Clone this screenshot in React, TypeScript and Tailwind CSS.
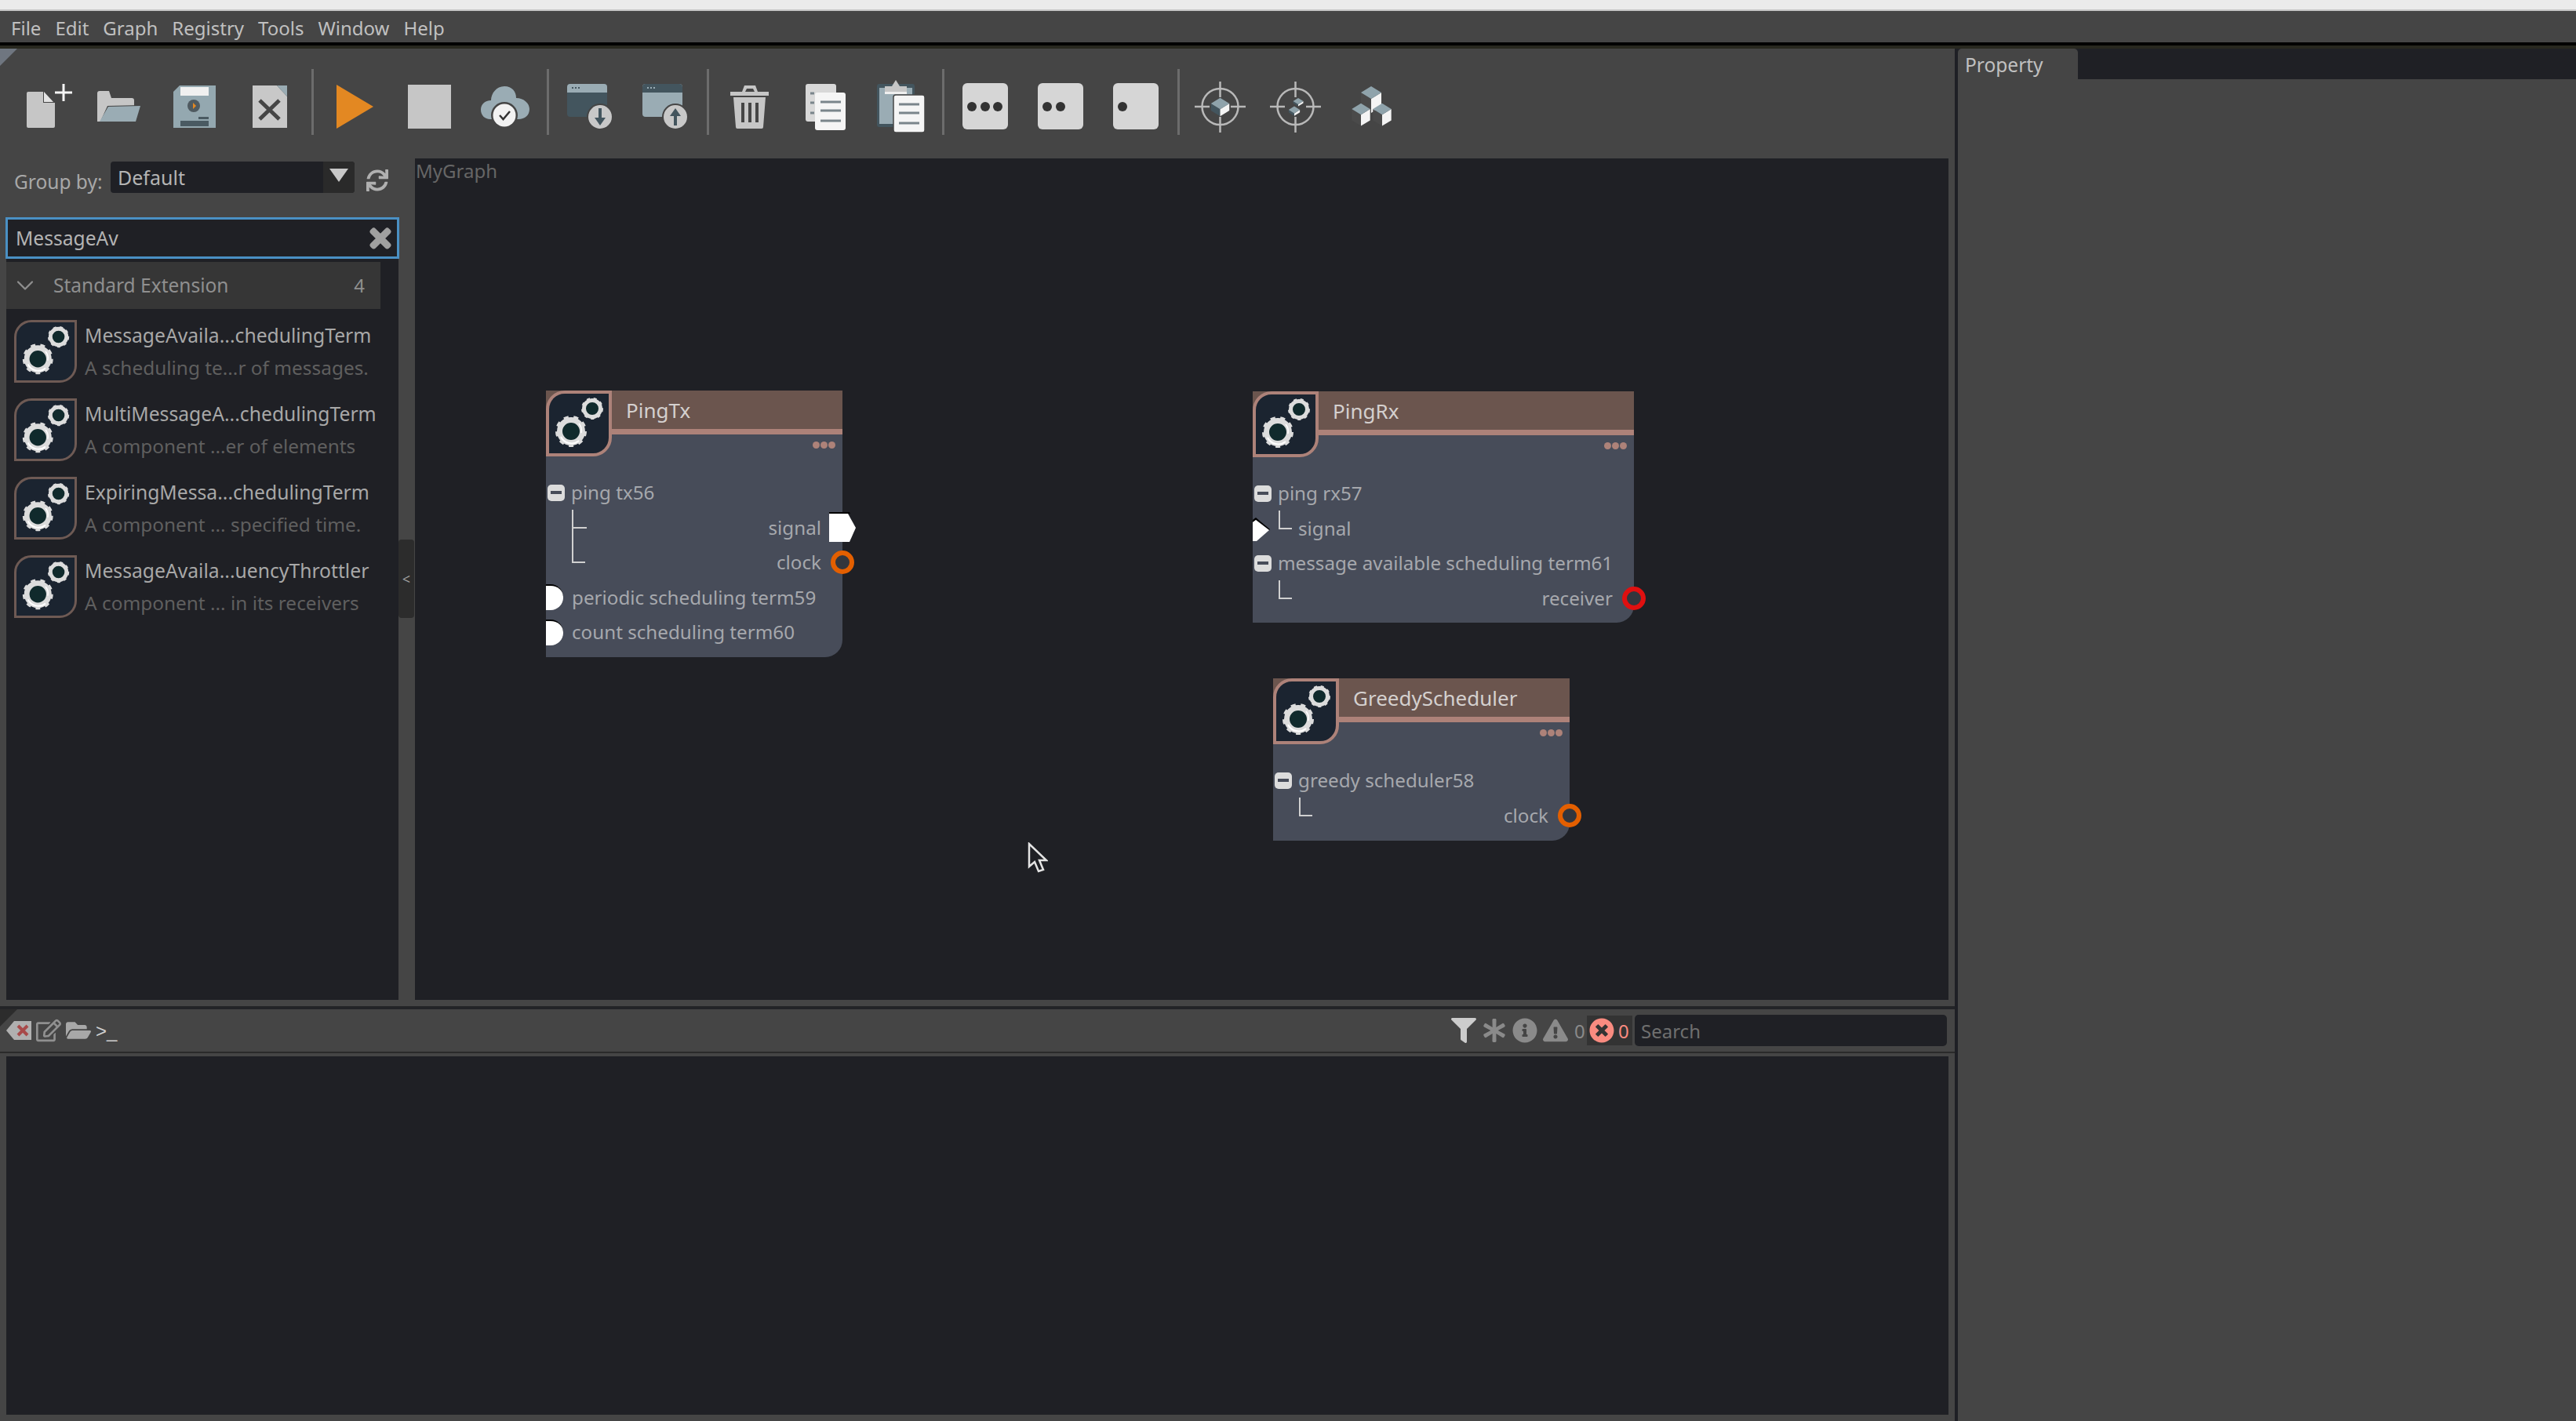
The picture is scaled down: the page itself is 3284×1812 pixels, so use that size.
import { FaAsterisk, FaExclamationTriangle, FaFilter, FaFolderOpen, FaInfoCircle, FaRegEdit, FaSync, FaTimes, FaTimesCircle } from "react-icons/fa"
import { ChevronDown } from "lucide-react"

const menus = ["File", "Edit", "Graph", "Registry", "Tools", "Window", "Help"]

const results = [
  { title: "MessageAvaila...chedulingTerm", desc: "A scheduling te...r of messages." },
  { title: "MultiMessageA...chedulingTerm", desc: "A component ...er of elements" },
  { title: "ExpiringMessa...chedulingTerm", desc: "A component ... specified time." },
  { title: "MessageAvaila...uencyThrottler", desc: "A component ... in its receivers" },
]

function Gears() {
  return (
    <svg viewBox="0 0 76 76" className="w-full h-full">
      <circle cx="28" cy="48" r="18" fill="none" stroke="#dcdcdc" strokeWidth="4" strokeDasharray="6 6.5" />
      <circle cx="28" cy="48" r="14.500" fill="#102a2c" stroke="#dcdcdc" strokeWidth="7" />
      <path d="M15 55 A15 15 0 0 0 38 60" fill="none" stroke="#fff" strokeWidth="2" />
      <path d="M38 38 A14 14 0 0 1 41 50" fill="none" stroke="#fff" strokeWidth="1.500" />
      <circle cx="55" cy="19" r="12.500" fill="none" stroke="#dcdcdc" strokeWidth="3" strokeDasharray="4 4.6" />
      <circle cx="55" cy="19" r="10.500" fill="#102a2c" stroke="#dcdcdc" strokeWidth="5" />
    </svg>
  )
}

function Divider() {
  return (
    <div className="w-[12px] h-[140px] flex items-center justify-center pb-[4px]">
      <div className="w-[3px] h-[84px] bg-[#6c6c6c]" />
    </div>
  )
}

function ToolIcon({ children }: { children: React.ReactNode }) {
  return (
    <button className="w-[96px] h-[96px] mt-[26px] shrink-0">
      <svg viewBox="0 0 96 96" className="w-[96px] h-[96px]">
        {children}
      </svg>
    </button>
  )
}

function Cube({ x, y, s = 1, h = 26, left = "#43555e" }: { x: number; y: number; s?: number; h?: number; left?: string }) {
  // x,y = centre of the top diamond
  return (
    <g transform={`translate(${x} ${y}) scale(${s})`}>
      <path d={`M-13 0 L0 8 V${8 + h} L-13 ${h} Z`} fill={left} />
      <path d={`M13 0 L0 8 V${8 + h} L13 ${h} Z`} fill="#f4f4f4" />
      <path d="M0 -8 L13 0 L0 8 L-13 0 Z" fill="#8fa3ab" />
    </g>
  )
}

function Crosshair() {
  return (
    <g fill="none" stroke="#b8b8b8">
      <circle cx="47.500" cy="48" r="23" strokeWidth="2.500" />
      <path d="M47.500 16 V36 M47.500 61 V81 M15 48 H34 M61 48 H80" strokeWidth="2.500" />
    </g>
  )
}

function DotsIcon({ n }: { n: number }) {
  return (
    <ToolIcon>
      <rect x="19" y="18" width="58" height="59" rx="6" fill="#d6d6d6" />
      {[31, 48, 64].slice(0, n).map((cx) => (
        <circle key={cx} cx={cx} cy="48" r="6" fill="#333" />
      ))}
    </ToolIcon>
  )
}

function WindowIcon({ up }: { up?: boolean }) {
  const dark = "#43555e"
  const light = "#9aacb4"
  return (
    <ToolIcon>
      <rect x="19" y="19" width="51" height="42" rx="4" fill={up ? light : dark} />
      <path d="M19 30 V23 a4 4 0 0 1 4 -4 H66 a4 4 0 0 1 4 4 V30 Z" fill={up ? dark : light} />
      <path d="M25 24 h2 M29 24 h2 M33 24 h2" stroke={up ? light : dark} strokeWidth="2" />
      <circle cx="61" cy="61" r="17" fill="#454545" />
      <circle cx="61" cy="61" r="15" fill="#c8c8c8" />
      {up ? (
        <path d="M61 50 L68 60 H63 V72 H59 V60 H54 Z" fill={dark} />
      ) : (
        <path d="M61 72 L68 62 H63 V50 H59 V62 H54 Z" fill={dark} />
      )}
    </ToolIcon>
  )
}

function Toolbar() {
  return (
    <div className="h-[140px] flex items-start pl-[8px] relative shrink-0">
      <div className="absolute left-0 top-0 w-[22px] h-[22px] bg-[#6f7680] [clip-path:polygon(0_0,100%_0,0_100%)]" />
      <ToolIcon>
        <path d="M26 31 a2 2 0 0 1 2 -2 H47 V43 H62 V73 a2 2 0 0 1 -2 2 H28 a2 2 0 0 1 -2 -2 Z" fill="#c6c6c6" />
        <path d="M48 29 L60 42 H48 Z" fill="#e4e4e4" />
        <path d="M73 19 V41 M62 30 H84" stroke="#f5f5f5" strokeWidth="3" />
      </ToolIcon>
      <ToolIcon>
        <path d="M20 31 a3 3 0 0 1 3 -3 H35 L38 37 H64 a3 3 0 0 1 3 3 V67 H20 Z" fill="#c6c6c6" />
        <path d="M33 47 L75 46 L68 67 a2 2 0 0 1 -2 2 H23 Z" fill="#454545" />
        <path d="M34 48 L75 47 L69 67 H23 Z" fill="#9aacb4" />
      </ToolIcon>
      <ToolIcon>
        <path d="M29 21 H75 V75 H21 V29 Z" fill="#94a8b0" />
        <rect x="30" y="23" width="36" height="11" fill="#f0f0f0" />
        <circle cx="47" cy="47" r="8" fill="#4f5a60" />
        <path d="M46 43 L50 47 L46 51 Z" fill="#e38822" />
        <rect x="53" y="61" width="13" height="3" fill="#4a5a62" />
        <rect x="30" y="66" width="36" height="7" fill="#4a5a62" />
      </ToolIcon>
      <ToolIcon>
        <path d="M26 21 H57 L70 35 V75 H26 Z" fill="#c8c8c8" />
        <path d="M57 21 H70 V35 Z" fill="#9aacb4" />
        <path d="M35 40 L60 64 M60 40 L35 64" stroke="#454545" strokeWidth="5" />
      </ToolIcon>
      <Divider />
      <ToolIcon>
        <path d="M25 20 L72 48 L25 76 Z" fill="#e38822" />
      </ToolIcon>
      <ToolIcon>
        <rect x="20" y="20" width="55" height="56" fill="#c6c6c6" />
      </ToolIcon>
      <ToolIcon>
        <path d="M47 22 c10 0 15 7 15 15 c10 0 17 7 17 14 c0 8 -6 13 -14 13 H29 c-7 0 -12 -5 -12 -12 c0 -7 5 -12 13 -12 c0 -9 7 -18 17 -18 Z" fill="#9aacb4" />
        <circle cx="47" cy="59" r="17" fill="#454545" />
        <circle cx="47" cy="59" r="14.500" fill="#f2f2f2" />
        <path d="M41 59 L45.500 64 L54 54" fill="none" stroke="#333" strokeWidth="2.500" />
      </ToolIcon>
      <Divider />
      <WindowIcon />
      <WindowIcon up />
      <Divider />
      <ToolIcon>
        <path d="M23 29 H72 V34 H23 Z" fill="#c6c6c6" />
        <path d="M38 29 L41 21 H55 L58 29 H54 L52 25 H44 L42 29 Z" fill="#c6c6c6" />
        <path d="M27 36 H68 L65 74 a2 2 0 0 1 -2 2 H32 a2 2 0 0 1 -2 -2 Z" fill="#c6c6c6" />
        <path d="M39 43 V68 M48 43 V68 M57 43 V68" stroke="#454545" strokeWidth="4" />
      </ToolIcon>
      <ToolIcon>
        <rect x="23" y="19" width="39" height="48" rx="3" fill="#d8d8d8" />
        <path d="M29 31 H34 M29 43 H34 M29 56 H34" stroke="#7a858b" strokeWidth="3" />
        <rect x="35" y="30" width="39" height="48" rx="3" fill="#f5f5f5" />
        <path d="M42 42 H68 M42 53 H68 M42 66 H68" stroke="#7a858b" strokeWidth="3" />
      </ToolIcon>
      <ToolIcon>
        <rect x="18" y="19" width="48" height="55" rx="3" fill="#43555e" />
        <rect x="21" y="24" width="42" height="46" fill="#9aacb4" />
        <path d="M28 22 H37 L42 14 L47 22 H56 V32 H28 Z" fill="#c6c6c6" />
        <rect x="28" y="29" width="28" height="3" fill="#efefef" />
        <rect x="39" y="33" width="40" height="48" rx="3" fill="#f5f5f5" stroke="#454545" strokeWidth="1.500" />
        <path d="M46 45 H72 M46 56 H72 M46 69 H72" stroke="#7a858b" strokeWidth="3" />
      </ToolIcon>
      <Divider />
      <DotsIcon n={3} />
      <DotsIcon n={2} />
      <DotsIcon n={1} />
      <Divider />
      <ToolIcon>
        <Crosshair />
        <Cube x={47.5} y={44} s={0.9} h={10} />
      </ToolIcon>
      <ToolIcon>
        <Crosshair />
        <Cube x={51} y={41} s={0.5} h={5} />
        <Cube x={46} y={52} s={0.55} h={6} />
      </ToolIcon>
      <ToolIcon>
        <Cube x={48} y={30} h={18} left="#4a4a4a" />
        <Cube x={35} y={51} s={0.9} h={16} left="#4a4a4a" />
        <Cube x={62} y={51} s={0.9} h={16} left="#4a4a4a" />
      </ToolIcon>
    </div>
  )
}

function ResultItem({ title, desc }: { title: string; desc: string }) {
  return (
    <div className="h-[100px] flex pl-[10px] pt-[13px]">
      <div className="w-[80px] h-[80px] shrink-0 border-[3px] border-[#6e5a54] bg-[#1b2430] rounded-tl-[22px] rounded-br-[22px] overflow-hidden">
        <Gears />
      </div>
      <div className="ml-[10px] pt-[2px] whitespace-nowrap">
        <div className="h-[40px] leading-[36px] text-[24.700px] text-[#a8a8a8]">{title}</div>
        <div className="h-[40px] leading-[38px] text-[24.400px] text-[#5f5f5f]">{desc}</div>
      </div>
    </div>
  )
}

function LeftPanel() {
  return (
    <div className="w-[529px] shrink-0 flex">
      <div className="w-[508px] flex flex-col pl-[8px]">
        <div className="h-[75px] flex items-start pt-[4px] shrink-0">
          <span className="w-[133px] pl-[10px] pt-[8px] text-[24.500px] leading-[36px] text-[#a8a8a8]">Group by:</span>
          <div className="w-[311px] h-[40px] flex bg-[#1f2025] rounded-[4px] overflow-hidden">
            <span className="flex-1 pl-[9px] text-[25px] leading-[40px] text-[#b4b4b4]">Default</span>
            <span className="w-[40px] bg-[#2a2a2a] flex justify-center pt-[9px]">
              <span className="w-[24px] h-[17px] bg-[#c8c8c8] [clip-path:polygon(0_0,100%_0,50%_100%)]" />
            </span>
          </div>
          <FaSync className="ml-[15px] mt-[10px] text-[#b0b0b0]" size={28} />
        </div>
        <div className="w-[502px] h-[53px] border-[3px] border-[#4a90c4] bg-[#1f2025] flex items-center pl-[10px] pr-[3px] shrink-0 -ml-[1px]">
          <span className="flex-1 pt-[2px] text-[24.600px] text-[#b4b4b4]">MessageAv</span>
          <FaTimes className="text-[#a0a0a0]" size={36} stroke="currentColor" strokeWidth={30} />
        </div>
        <div className="flex-1 bg-[#1f2025] w-[500px] pt-[4px]">
          <div className="w-[477px] h-[60px] bg-[#363636] flex items-center pl-[6px] pr-[20px] text-[#8f8f8f]">
            <ChevronDown size={36} strokeWidth={1.500} />
            <span className="ml-[18px] flex-1 text-[24.500px] pt-[1px]">Standard Extension</span>
            <span className="text-[24px]">4</span>
          </div>
          <div className="pt-[1px]">
            {results.map((r) => (
              <ResultItem key={r.title} {...r} />
            ))}
          </div>
        </div>
      </div>
      <div className="w-[21px] flex items-start">
        <div className="w-[20px] h-[100px] mt-[486px] bg-[#2c2c2c] rounded-[4px] flex items-center justify-center text-[18px] text-[#a0a0a0]">
          &lt;
        </div>
      </div>
    </div>
  )
}

function MinusBox() {
  return (
    <span className="w-[22px] h-[21px] rounded-[5px] bg-[#dcdcdc] flex items-center justify-center shrink-0">
      <span className="w-[14px] h-[4px] bg-[#474c59]" />
    </span>
  )
}

function GroupRow({ label, port }: { label: string; port?: React.ReactNode }) {
  return (
    <div className="h-[44.500px] flex items-center relative">
      {port ?? <span className="ml-[2px]"><MinusBox /></span>}
      <span className={port ? "ml-[11px]" : "ml-[8px]"}>{label}</span>
    </div>
  )
}

function Ring({ color }: { color: string }) {
  return (
    <span
      className="absolute -right-[15px] top-[7px] w-[30px] h-[30px] rounded-full border-[6px] bg-[#33363d]"
      style={{ borderColor: color }}
    />
  )
}

function ChildRow({ label, right, tree, color, port }: { label?: string; right?: boolean; tree?: "tee" | "corner" | "long"; color?: string; port?: React.ReactNode }) {
  return (
    <div className={`h-[44.500px] flex items-center relative ${right ? "justify-end" : ""}`}>
      {tree === "tee" && <span className="absolute left-[33px] -top-[1px] w-[17px] h-[44.500px] border-l-[2px] border-[#d0d0d0]"><span className="absolute left-0 top-[22px] w-[17px] border-t-[2px] border-[#d0d0d0]" /></span>}
      {tree === "corner" && <span className="absolute left-[33px] -top-[1px] w-[17px] h-[24px] border-l-[2px] border-b-[2px] border-[#d0d0d0]" />}
      {tree === "long" && <span className="absolute left-[33px] -top-[23px] w-[17px] h-[46px] border-l-[2px] border-b-[2px] border-[#d0d0d0]" />}
      {label && <span className={right ? "mr-[27px]" : "ml-[58px]"}>{label}</span>}
      {color && <Ring color={color} />}
      {port}
    </div>
  )
}

function NodeCard({ title, x, y, w, h, children }: { title: string; x: number; y: number; w: number; h: number; children: React.ReactNode }) {
  return (
    <div
      className="absolute bg-[#474c59] rounded-br-[22px] text-[24.200px] text-[#a6a8ad]"
      style={{ left: x, top: y, width: w, height: h }}
    >
      <div className="h-[56px] bg-[#6b554e] border-b-[7px] border-[#ad8279] pl-[102px] pt-[7px] text-[26px] leading-[36px] text-[#d4d0ce]">
        {title}
      </div>
      <div className="absolute left-0 top-0 w-[84px] h-[84px] border-[4px] border-[#ad8279] bg-[#1b2430] rounded-tl-[24px] rounded-br-[24px] overflow-hidden">
        <Gears />
      </div>
      <div className="absolute right-[9px] top-[65px] flex gap-[1px]">
        <span className="w-[9px] h-[9px] rounded-full bg-[#ad8279]" />
        <span className="w-[9px] h-[9px] rounded-full bg-[#ad8279]" />
        <span className="w-[9px] h-[9px] rounded-full bg-[#ad8279]" />
      </div>
      <div className="pt-[52px]">{children}</div>
    </div>
  )
}

function HalfPort() {
  return <span className="w-[22px] h-[33px] shrink-0 rounded-r-[16px] bg-white border-t-[2px] border-black" />
}

function Canvas() {
  return (
    <div className="flex-1 bg-[#1f2025] relative overflow-visible">
      <span className="absolute left-[1px] top-[1px] text-[24px] leading-[30px] text-[#666666]">MyGraph</span>

      <NodeCard title="PingTx" x={167} y={296} w={378} h={340}>
        <GroupRow label="ping tx56" />
        <ChildRow label="signal" right tree="tee" port={
          <svg viewBox="0 0 34 40" className="absolute -right-[17px] top-[2px] w-[34px] h-[40px]">
            <path d="M0 0 H26 L27 2 H0 Z" fill="#000" />
            <path d="M0 2 H24 L34 20 L26 38 H0 Z" fill="#fff" />
          </svg>
        } />
        <ChildRow label="clock" right tree="long" color="#e35f00" />
        <GroupRow label="periodic scheduling term59" port={<HalfPort />} />
        <GroupRow label="count scheduling term60" port={<HalfPort />} />
      </NodeCard>

      <NodeCard title="PingRx" x={1068} y={297} w={486} h={295}>
        <GroupRow label="ping rx57" />
        <ChildRow label="signal" tree="corner" port={
          <svg viewBox="0 0 22 32" className="absolute left-0 top-[8px] w-[22px] h-[32px]">
            <path d="M0 3 L4 0 L22 15 L21 16 L4 3 L0 6 Z" fill="#000" />
            <path d="M0 6 L4 3 L21 16 L5 30 H0 Z" fill="#fff" />
          </svg>
        } />
        <GroupRow label="message available scheduling term61" />
        <ChildRow label="receiver" right tree="corner" color="#e01010" />
      </NodeCard>

      <NodeCard title="GreedyScheduler" x={1094} y={663} w={378} h={207}>
        <GroupRow label="greedy scheduler58" />
        <ChildRow label="clock" right tree="corner" color="#e35f00" />
      </NodeCard>

      {/* mouse cursor */}
      <svg viewBox="0 0 26 40" className="absolute left-[781px] top-[872px] w-[26px] h-[40px]">
        <path d="M2 2 V31 L9 25 L14 37 L20 35 L15 23 H24 Z" fill="#1f2025" stroke="#e4e4e4" strokeWidth="2.500" />
      </svg>
    </div>
  )
}

function ConsoleBar() {
  return (
    <div className="h-[54px] flex items-center relative text-[#8a8a8a] shrink-0 pr-[10px] border-b-[2px] border-[#2a2a2a] box-content">
      <div className="absolute left-0 top-0 w-[22px] h-[22px] bg-[#2c2c2c] [clip-path:polygon(0_0,100%_0,0_100%)]" />
      <svg viewBox="0 0 32 24" className="w-[32px] h-[24px] ml-[8px]">
        <path d="M0 12 L10 0 H32 V24 H10 Z" fill="#b0b0b0" />
        <path d="M15 6 L27 18 M27 6 L15 18" stroke="#a84a4a" strokeWidth="4" />
      </svg>
      <FaRegEdit className="ml-[6px] text-[#909090]" size={32} />
      <FaFolderOpen className="ml-[6px] text-[#a8a8a8]" size={32} />
      <span className="ml-[6px] pt-[2px] text-[24px] font-['Liberation_Sans',sans-serif] text-[#d0d0d0]">&gt;_</span>
      <div className="flex-1" />
      <FaFilter className="text-[#cccccc]" size={32} />
      <FaAsterisk className="ml-[8px]" size={30} />
      <FaInfoCircle className="ml-[8px]" size={32} />
      <FaExclamationTriangle className="ml-[7px]" size={32} />
      <span className="ml-[8px] w-[16px] pt-[2px] text-[24px]">0</span>
      <div className="w-[58px] h-[38px] bg-[#333333] flex items-center pl-[3px] text-[#f98b80]">
        <FaTimesCircle size={32} />
        <span className="ml-[5px] pt-[2px] text-[24px]">0</span>
      </div>
      <div className="ml-[3px] w-[398px] h-[40px] bg-[#1f2025] rounded-[5px] pl-[8px] text-[24px] leading-[42px] text-[#6f6f6f]">Search</div>
    </div>
  )
}

export default function App() {
  return (
    <div className="w-[3284px] h-[1812px] overflow-hidden bg-[#454545] flex flex-col font-['Noto_Sans','Open_Sans',sans-serif]">
      <div className="h-[14px] bg-[#ebebeb] border-b-[2px] border-[#c5c5c5] shrink-0" />
      <div className="h-[40px] flex items-center pl-[14px] pt-[3px] gap-[18px] text-[24px] text-[#c0c0c0] shrink-0">
        {menus.map((m) => (
          <span key={m}>{m}</span>
        ))}
      </div>
      <div className="h-[4px] bg-black shrink-0" />
      <div className="h-[4px] bg-[#28281f] shrink-0" />
      <div className="flex-1 flex min-h-0">
        <div className="w-[2492px] flex flex-col">
          <Toolbar />
          <div className="h-[1073px] flex shrink-0 pr-[8px]">
            <LeftPanel />
            <Canvas />
          </div>
          <div className="h-[8px] shrink-0" />
          <div className="h-[4px] bg-[#232427] shrink-0" />
          <ConsoleBar />
          <div className="flex-1 mx-[8px] mt-[4px] mb-[8px] bg-[#1f2025]" />
        </div>
        <div className="w-[4px] bg-[#1f2025]" />
        <div className="flex-1 flex flex-col">
          <div className="h-[39px] bg-[#1f2025] flex">
            <div className="w-[153px] bg-[#454545] rounded-t-[5px] pl-[9px] text-[24.500px] leading-[42px] text-[#c0c0c0]">Property</div>
          </div>
          <div className="flex-1" />
        </div>
      </div>
    </div>
  )
}
